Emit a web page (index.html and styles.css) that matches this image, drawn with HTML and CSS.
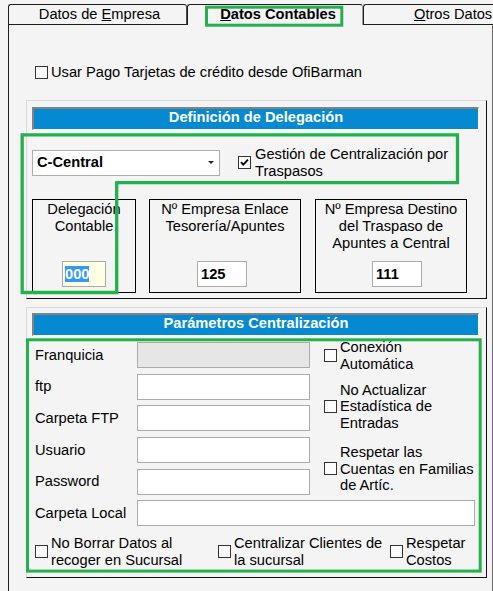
FILE: index.html
```html
<!DOCTYPE html>
<html lang="es">
<head>
<meta charset="utf-8">
<title>Datos Contables</title>
<link rel="stylesheet" href="styles.css">
</head>
<body>
<div class="tabs">
  <div class="tab tab1">Datos de <u>E</u>mpresa</div>
  <div class="tab tab2"><u>D</u>atos Contables</div>
  <div class="tab tab3"><u>O</u>tros Datos</div>
</div>
<div class="panel">
  <div class="chk top-chk"><span class="cb"></span><span class="lbl">Usar Pago Tarjetas de crédito desde OfiBarman</span></div>

  <section class="group g1">
    <div class="bar">Definición de Delegación</div>
    <div class="combo-row">
      <div class="combo"><span>C-Central</span><span class="arrow"></span></div>
      <div class="chk gestion">
        <span class="cb"><svg viewBox="0 0 11 11" width="11" height="11"><path d="M2 5.2 L4.3 7.6 L9 2.6" fill="none" stroke="#000" stroke-width="1.8"/></svg></span>
        <span class="lbl">Gestión de Centralización por<br>Traspasos</span>
      </div>
    </div>
    <div class="boxes">
      <div class="box b1">
        <div class="box-title">Delegación<br>Contable</div>
        <div class="field in1"><span class="sel">000</span></div>
      </div>
      <div class="box b2">
        <div class="box-title">Nº Empresa Enlace<br>Tesorería/Apuntes</div>
        <div class="field in2">125</div>
      </div>
      <div class="box b3">
        <div class="box-title">Nº Empresa Destino<br>del Traspaso de<br>Apuntes a Central</div>
        <div class="field in3">111</div>
      </div>
    </div>
  </section>

  <section class="group g2">
    <div class="bar">Parámetros Centralización</div>
    <div class="g2-main">
      <div class="fields">
        <span class="flabel">Franquicia</span><div class="field disabled"></div>
        <span class="flabel">ftp</span><div class="field"></div>
        <span class="flabel">Carpeta FTP</span><div class="field"></div>
        <span class="flabel">Usuario</span><div class="field"></div>
        <span class="flabel">Password</span><div class="field"></div>
      </div>
      <div class="right-checks">
        <div class="chk rc1"><span class="cb"></span><span class="lbl">Conexión<br>Automática</span></div>
        <div class="chk rc2"><span class="cb"></span><span class="lbl">No Actualizar<br>Estadística de<br>Entradas</span></div>
        <div class="chk rc3"><span class="cb"></span><span class="lbl">Respetar las<br>Cuentas en Familias<br>de Artíc.</span></div>
      </div>
    </div>
    <div class="local-row">
      <span class="flabel">Carpeta Local</span><div class="field"></div>
    </div>
    <div class="bottom-checks">
      <div class="chk bc1"><span class="cb"></span><span class="lbl">No Borrar Datos al<br>recoger en Sucursal</span></div>
      <div class="chk bc2"><span class="cb"></span><span class="lbl">Centralizar Clientes de<br>la sucursal</span></div>
      <div class="chk bc3"><span class="cb"></span><span class="lbl">Respetar<br>Costos</span></div>
    </div>
  </section>
</div>

<svg class="marks" width="493" height="591" viewBox="0 0 493 591">
  <rect x="206.5" y="7.2" width="135.3" height="18" fill="none" stroke="#22b14c" stroke-width="3"/>
  <path d="M22.2 134.8 H457.5 V182.7 H116.7 V292.5 H22.2 Z" fill="none" stroke="#22b14c" stroke-width="3.3"/>
  <rect x="27.5" y="339.8" width="452.7" height="231.3" fill="none" stroke="#22b14c" stroke-width="3"/>
</svg>
</body>
</html>
```

FILE: styles.css
```css
* { box-sizing: border-box; }
html, body { margin: 0; padding: 0; }
body {
  width: 493px;
  height: 591px;
  overflow: hidden;
  position: relative;
  background: #f4f4f4;
  color: #000;
  font-family: "Liberation Sans", Arial, sans-serif;
  font-size: 14.67px;
  line-height: 16.7px;
}

/* Tabs */
.tabs {
  display: flex;
  height: 25px;
  padding: 4px 0 0 8px;
}
.tab {
  height: 21px;
  border: 1px solid #1e1e1e;
  border-radius: 3px 3px 0 0;
  line-height: 19px;
  white-space: nowrap;
}
.tab1 {
  width: 179px;
  text-align: center;
  padding-left: 4px;
  border-right-color: #4a4a4a;
}
.tab2 {
  width: 176px;
  border-bottom: none;
  border-right-color: #a0a0a0;
  font-weight: bold;
  text-align: center;
  padding-left: 6px;
}
.tab3 {
  flex: 1;
  padding-left: 50px;
  border-right: none;
  border-radius: 3px 0 0 0;
}

/* Panel */
.panel {
  margin-left: 8px;
  width: 485px;
  height: 566px;
  border-left: 1px solid #1e1e1e;
  border-right: 1px solid #6a6a6a;
  padding: 39.3px 0 0 17px;
}

.chk {
  display: flex;
  align-items: center;
  gap: 3px;
  white-space: nowrap;
}
.cb {
  flex: none;
  width: 13px;
  height: 13px;
  border: 1px solid #333;
  background: #fcfcfc;
  display: flex;
  align-items: center;
  justify-content: center;
}
.top-chk {
  height: 16.7px;
  padding-left: 9px;
}

/* Group boxes */
.group {
  width: 461px;
  border: 1px solid;
  border-color: #dadada #111 #111 #dadada;
}
.g1 {
  margin-top: 19px;
  height: 199px;
  padding: 6px 7px 0 5px;
}
.g2 {
  margin-top: 8px;
  height: 271px;
  padding: 5px 7px 0 5px;
}
.bar {
  height: 23px;
  background: #0589d1;
  color: #fff;
  font-weight: bold;
  text-align: center;
  line-height: 17px;
  border-top: 2px solid #828282;
  border-left: 2px solid #828282;
  border-right: 1px solid #fff;
  border-bottom: 1px solid #fff;
}

/* Group 1 */
.combo-row {
  display: flex;
  align-items: center;
  margin-top: 15.9px;
  height: 33.4px;
}
.combo {
  width: 188px;
  height: 26px;
  background: #fff;
  border: 1px solid #adadad;
  font-weight: bold;
  padding-left: 4px;
  display: flex;
  align-items: center;
}
.arrow {
  margin-left: auto;
  margin-right: 5px;
  width: 0;
  height: 0;
  border-left: 3.5px solid transparent;
  border-right: 3.5px solid transparent;
  border-top: 3px solid #1c1c6a;
}
.gestion {
  margin-left: 18px;
  gap: 4px;
}

.boxes {
  display: flex;
  margin-top: 20px;
}
.box {
  height: 94px;
  border: 1px solid #000;
  display: flex;
  flex-direction: column;
  justify-content: space-between;
  align-items: flex-start;
  padding: 1px 0 5px 0;
  white-space: nowrap;
}
.box-title {
  align-self: stretch;
  text-align: center;
}
.b1 { width: 104px; }
.b2 { width: 152px; margin-left: 13px; }
.b3 { width: 152px; margin-left: 14px; }

.field {
  height: 26px;
  background: #fff;
  border: 1px solid #ababab;
  font-weight: bold;
  padding-left: 3px;
  line-height: 24px;
}
.field.disabled { background: #e6e6e6; }
.in1 { width: 44px; margin-left: 29px; background: #ffffe1; padding-left: 2px; }
.in2 { width: 50px; margin-left: 47px; }
.in3 { width: 50px; margin-left: 56px; }
.sel {
  background: #3399ff;
  color: #fff;
}

/* Group 2 */
.g2-main {
  display: flex;
  align-items: flex-start;
}
.fields {
  display: grid;
  grid-template-columns: 102px 173px;
  grid-auto-rows: 26px;
  row-gap: 5.7px;
  padding: 6px 0 0 3px;
}
.flabel {
  align-self: center;
  white-space: nowrap;
}
.right-checks {
  margin-left: 14px;
  padding-top: 2.9px;
  display: flex;
  flex-direction: column;
}
.rc2 { margin-top: 9.3px; }
.rc3 { margin-top: 12.2px; }

.local-row {
  display: grid;
  grid-template-columns: 102px 338px;
  margin-top: 5.7px;
  padding-left: 3px;
}
.bottom-checks {
  display: flex;
  margin-top: 8.4px;
  padding-left: 3px;
}
.bc1 { width: 183px; }
.bc2 { width: 172px; }
.bc3 { flex: 1; }

/* annotation overlay */
.marks {
  position: absolute;
  left: 0;
  top: 0;
  pointer-events: none;
}
```
